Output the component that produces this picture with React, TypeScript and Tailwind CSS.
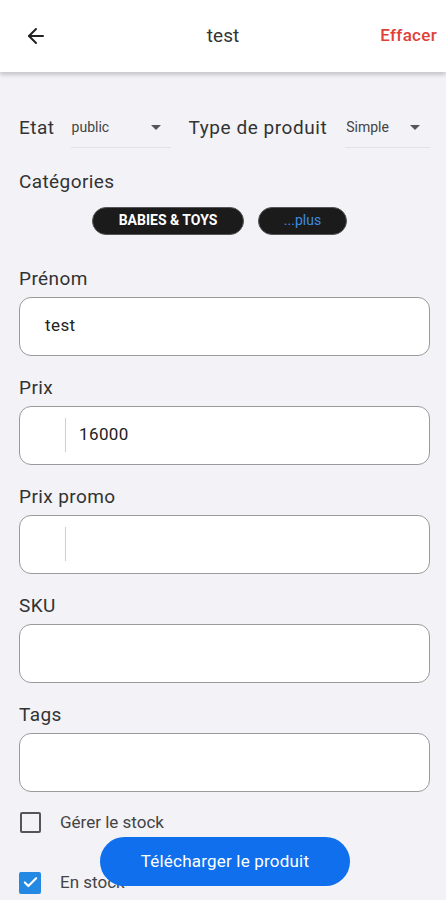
import { ArrowLeft, Check } from "lucide-react";

const font = { fontFamily: "Roboto, 'Noto Sans', sans-serif" };

const Field = ({
  label,
  value,
  prefix,
}: {
  label: string;
  value?: string;
  prefix?: boolean;
}) => (
  <div className="flex flex-col">
    <p className="text-[19px] leading-[22px] tracking-[0.4px] text-[#333] mb-[7px]">{label}</p>
    <div className="h-[59px] bg-white border border-[#9a9a9a] rounded-[12px] flex items-center">
      {prefix ? (
        <>
          <div className="w-[46px] h-[34px] border-r border-[#cfcfcf]" />
          <span className="pl-[13px] text-[17px] tracking-[0.4px] text-[#222]">{value}</span>
        </>
      ) : (
        <span className="pl-[25px] text-[17px] tracking-[0.4px] text-[#222]">{value}</span>
      )}
    </div>
  </div>
);

const Select = ({ value, width }: { value: string; width: string }) => (
  <div className={`${width} shrink-0 h-[40px] border-b border-[#e3e3e3] flex items-center justify-between`}>
    <span className="text-[14px] text-[#444] pl-[1px]">{value}</span>
    <svg width="10" height="5" viewBox="0 0 10 5" className="mr-[10px]">
      <path d="M0 0h10L5 5z" fill="#555" />
    </svg>
  </div>
);

export default function App() {
  return (
    <div className="w-[446px] h-[900px] bg-[#f2f2f7] relative overflow-hidden" style={font}>
      <div className="h-[72px] bg-white flex items-center justify-between px-[24px] shadow-[0_3px_4px_rgba(0,0,0,0.18)] relative">
        <ArrowLeft size={24} strokeWidth={2} className="text-[#222]" />
        <span className="absolute left-1/2 -translate-x-1/2 text-[19px] text-[#333]">test</span>
        <span className="text-[17px] font-medium tracking-[0.3px] text-[#e0403a] -mr-[15px]">Effacer</span>
      </div>

      <div className="pl-[19px] pr-[16px] pt-[36px]">
        <div className="flex items-center h-[40px] whitespace-nowrap">
          <span className="text-[19px] tracking-[0.5px] text-[#333] mr-[16px]">Etat</span>
          <Select value="public" width="w-[100px]" />
          <span className="text-[19px] tracking-[0.55px] text-[#333] ml-[18px] mr-[18px]">Type de produit</span>
          <Select value="Simple" width="w-[85px]" />
        </div>

        <p className="text-[19px] tracking-[0.4px] text-[#333] mt-[20px]">Catégories</p>
        <div className="flex justify-center gap-[14px] mt-[10px] mr-[10px]">
          <div className="h-[28px] w-[152px] rounded-full bg-[#1b1b1b] border border-[#555] flex items-center justify-center text-white text-[14px] font-bold">
            BABIES &amp; TOYS
          </div>
          <div className="h-[28px] w-[89px] rounded-full bg-[#1b1b1b] border border-[#555] flex items-center justify-center text-[#3d8be0] text-[14px]">
            ...plus
          </div>
        </div>

        <div className="flex flex-col gap-[21px] mt-[33px]">
          <Field label="Prénom" value="test" />
          <Field label="Prix" value="16000" prefix />
          <Field label="Prix promo" value="" prefix />
          <Field label="SKU" />
          <Field label="Tags" />
        </div>

        <div className="flex items-center mt-[18px]">
          <div className="w-[21px] h-[21px] ml-[1px] border-2 border-[#555] rounded-[2px]" />
          <span className="ml-[19px] text-[17px] text-[#444]">Gérer le stock</span>
        </div>
        <div className="flex items-center mt-[35px]">
          <div className="w-[22px] h-[22px] bg-[#2489e3] rounded-[2px] flex items-center justify-center">
            <Check size={17} strokeWidth={3} className="text-white" />
          </div>
          <span className="ml-[19px] text-[17px] text-[#444]">En stock</span>
        </div>
      </div>

      <button className="absolute left-[100px] top-[837px] w-[250px] h-[49px] rounded-full bg-[#0f6fec] text-white text-[17px] tracking-[0.2px]">
        Télécharger le produit
      </button>
    </div>
  );
}
